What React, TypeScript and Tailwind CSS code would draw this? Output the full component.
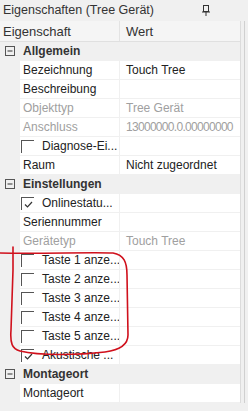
import React from "react";

type Row =
  | { kind: "group"; label: string }
  | { kind: "prop"; label: string; value?: string; disabled?: boolean; tight?: boolean }
  | { kind: "check"; label: string; checked?: boolean };

const rows: Row[] = [
  { kind: "group", label: "Allgemein" },
  { kind: "prop", label: "Bezeichnung", value: "Touch Tree" },
  { kind: "prop", label: "Beschreibung" },
  { kind: "prop", label: "Objekttyp", value: "Tree Gerät", disabled: true },
  { kind: "prop", label: "Anschluss", value: "13000000.0.00000000", disabled: true, tight: true },
  { kind: "check", label: "Diagnose-Ei..." },
  { kind: "prop", label: "Raum", value: "Nicht zugeordnet" },
  { kind: "group", label: "Einstellungen" },
  { kind: "check", label: "Onlinestatu...", checked: true },
  { kind: "prop", label: "Seriennummer" },
  { kind: "prop", label: "Gerätetyp", value: "Touch Tree", disabled: true },
  { kind: "check", label: "Taste 1 anze..." },
  { kind: "check", label: "Taste 2 anze..." },
  { kind: "check", label: "Taste 3 anze..." },
  { kind: "check", label: "Taste 4 anze..." },
  { kind: "check", label: "Taste 5 anze..." },
  { kind: "check", label: "Akustische ...", checked: true },
  { kind: "group", label: "Montageort" },
  { kind: "prop", label: "Montageort" },
];

function CheckBox({ checked }: { checked?: boolean }) {
  return (
    <div className="relative w-[13px] h-[13px] border-l border-t border-[#555] shrink-0">
      {checked && (
        <svg className="absolute left-[1px] top-[1px]" width="11" height="11" viewBox="0 0 11 11">
          <path d="M2 5.5 L4.5 8 L9 3" stroke="#333" strokeWidth="1.2" fill="none" />
        </svg>
      )}
    </div>
  );
}

function GridRow({ row }: { row: Row }) {
  if (row.kind === "group") {
    return (
      <div className="flex items-center h-[19px] bg-[#f0f0f0] border-b border-[#f0f0f0]">
        <div className="w-[20px] flex justify-center">
          <svg width="10" height="10" viewBox="0 0 10 10">
            <rect x="0.5" y="0.5" width="9" height="9" fill="none" stroke="#555" />
            <path d="M2.5 5 H7.5" stroke="#333" />
          </svg>
        </div>
        <span className="pl-[3px] font-bold text-[#333]">{row.label}</span>
      </div>
    );
  }
  return (
    <div className="flex h-[19px]">
      <div className="w-[20px] bg-[#f0f0f0]" />
      <div className="w-[100px] bg-white border-b border-r border-[#f0f0f0] flex items-center pl-[3px] overflow-hidden whitespace-nowrap">
        {row.kind === "check" ? (
          <div className="flex items-center gap-[8px] -ml-[2px]">
            <CheckBox checked={row.checked} />
            <span className="text-[#222]">{row.label}</span>
          </div>
        ) : (
          <span className={row.disabled ? "text-[#a0a0a0]" : "text-[#222]"}>{row.label}</span>
        )}
      </div>
      <div className="w-[120px] bg-white border-b border-[#f0f0f0] flex items-center pl-[6px] overflow-hidden whitespace-nowrap">
        {row.kind === "prop" && row.value && (
          <span
            className={
              (row.disabled ? "text-[#a0a0a0]" : "text-[#222]") + (row.tight ? " tracking-[-0.7px]" : "")
            }
          >
            {row.value}
          </span>
        )}
      </div>
    </div>
  );
}

export default function App() {
  return (
    <div
      className="relative w-[248px] h-[411px] bg-[#f0f0f0] overflow-hidden text-[12px] leading-none"
      style={{ fontFamily: '"Segoe UI", "Liberation Sans", Arial, sans-serif' }}
    >
      {/* title bar */}
      <div className="flex items-center justify-between h-[21px] pl-[3px] pr-[38px] text-[#333] text-[12.5px]">
        <span>Eigenschaften (Tree Gerät)</span>
        <svg width="8" height="11" viewBox="0 0 8 11">
          <rect x="1.5" y="0.5" width="5" height="6" fill="none" stroke="#333" />
          <path d="M0 7 H8 M4 7 V11" stroke="#333" />
        </svg>
      </div>

      <div className="flex">
        <div className="w-[240px]">
          {/* header */}
          <div className="flex h-[21px] bg-[#f5f5f5] border-b border-[#e0e0e0] text-[#333] text-[13px]">
            <div className="w-[120px] border-r border-[#e3e3e3] flex items-center pl-[3px]">Eigenschaft</div>
            <div className="flex-1 flex items-center pl-[6px]">Wert</div>
          </div>
          {rows.map((r, i) => (
            <GridRow key={i} row={r} />
          ))}
        </div>
        <div className="w-[8px] flex">
          <div className="w-[4px] border-l border-[#dcdcdc]" />
          <div className="w-[4px] border-l border-[#d0d0d0]" />
        </div>
      </div>

      {/* red hand-drawn annotation */}
      <svg className="absolute left-0 top-0 pointer-events-none" width="248" height="411" viewBox="0 0 248 411">
        <path
          d="M0 253 C40 254 90 252 113 253 C124 255 127 262 127 275 L128 335 C128 345 120 350 105 352 C80 355 40 356 20 351 C12 349 10 343 11 330 L13 270 C13 260 13 252 13 247"
          stroke="#d0101c"
          strokeWidth="1.6"
          fill="none"
          strokeLinecap="round"
        />
      </svg>
    </div>
  );
}
